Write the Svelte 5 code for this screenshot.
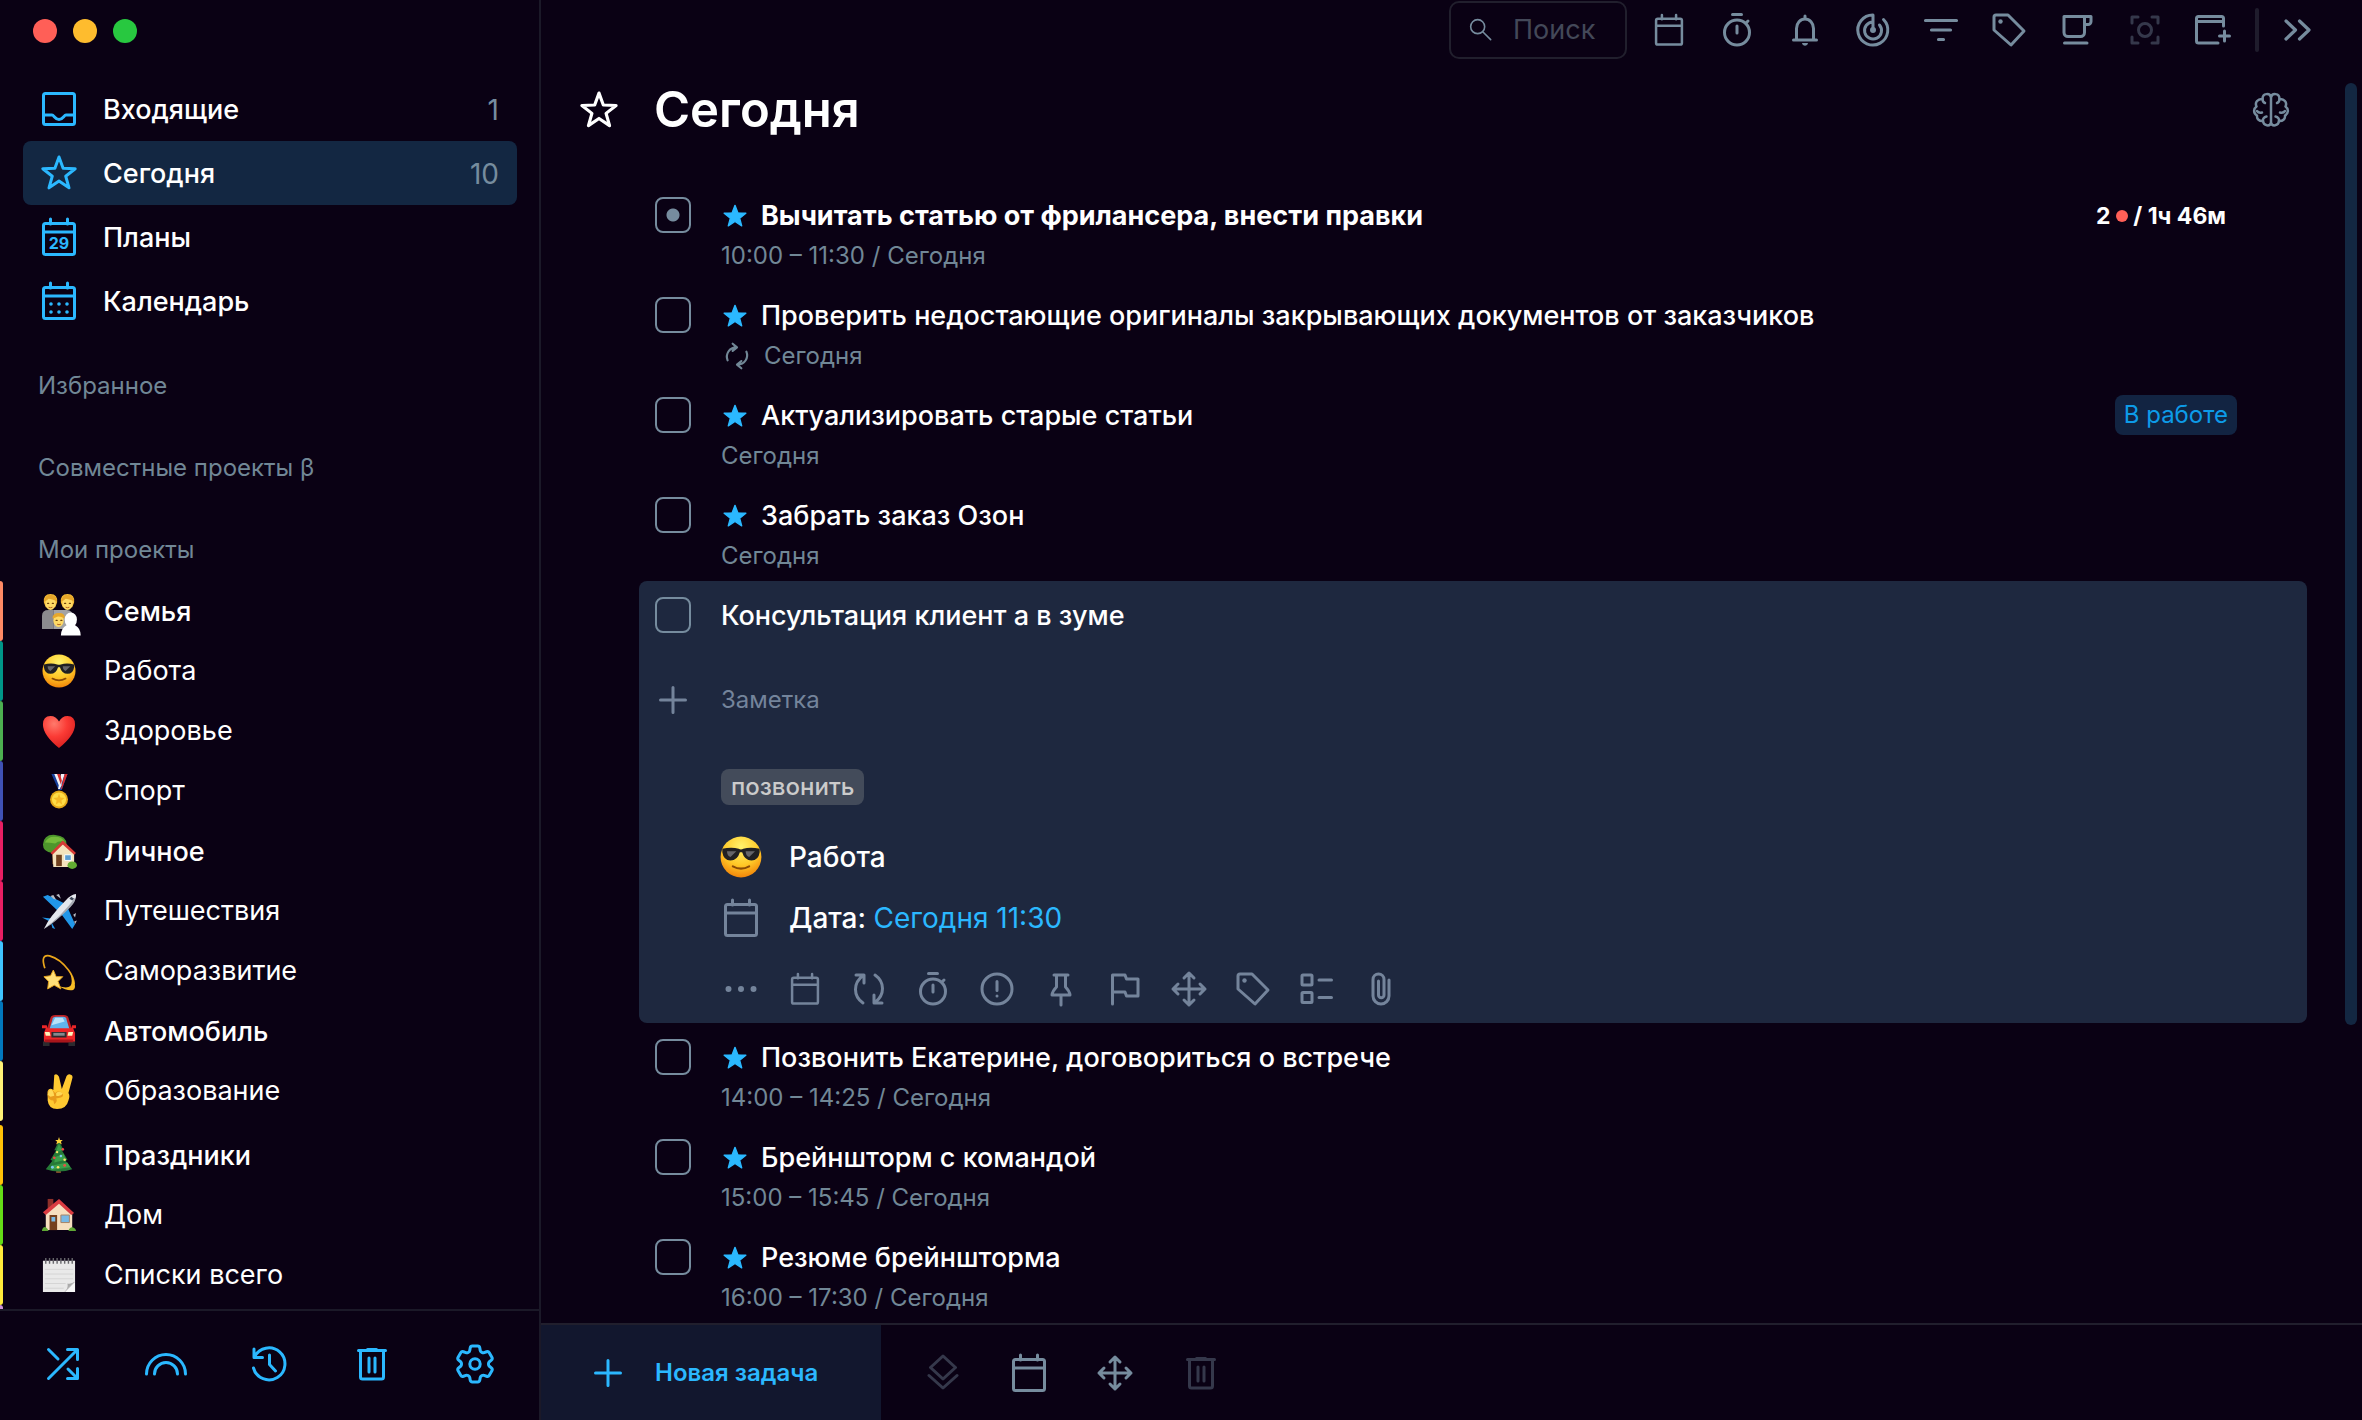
<!-- App.svelte -->
<script lang="ts">
  type Project = { name: string; emoji: string; color: string; strong?: boolean; spaced?: boolean };
  type Task = { title: string; meta: string; bold?: boolean; repeat?: boolean; timer?: boolean; status?: string };

  let search = $state('');
  let note = $state('');
  let openTitle = $state('Консультация клиент а в зуме');

  // Stroke icons, all on a 36x36 grid
  const calendar = '<rect x="2.5" y="4.5" width="31" height="31" rx="2"/><path d="M9.5 0v5M26.5 0v5M3 13h30"/>';
  const icons: Record<string, string> = {
    inbox: '<rect x="2.5" y="2.5" width="31" height="31" rx="2"/><path d="M3 24h8c2 0 3 4.5 7 4.5s5-4.5 7-4.5h8"/>',
    star: '<path d="M18 2l4.1 11.3 12.1.4-9.5 7.5L28 32.8 18 26 8 32.8l3.3-11.6-9.5-7.5 12.1-.4z"/>',
    starFill: '<path fill="currentColor" stroke-width="2" d="M18 2l4.300 11.200 12 .5-9.300 7.500 3.100 11.600L18 26.300 7.900 32.800 11 21.200l-9.300-7.500 12-.5z"/>',
    calendar,
    plans: calendar + '<text x="18" y="30" text-anchor="middle" font-size="16" font-weight="700" fill="currentColor" stroke="none">29</text>',
    month: calendar + '<path stroke-width="3.600" d="M10 21h0M18 21h0M26 21h0M10 29h0M18 29h0M26 29h0"/>',
    search: '<g stroke-width="2.400"><circle cx="13" cy="13" r="10.500"/><path d="M21 21L32.500 32.500"/></g>',
    timer: '<circle cx="18" cy="20.500" r="12.500"/><path d="M13.500 2.500h9M27 11l2-2M18 14v7"/>',
    bell: '<path d="M9.500 28V16.500a8.500 9.500 0 0 1 17 0V28M6.500 28h23M18 4v3"/><path fill="currentColor" stroke="none" d="M15 31h6c-.5 3.500-5.500 3.500-6 0z"/>',
    radar: '<path d="M18 16V3A15 15 0 1 0 28.500 7.500M18 10a8.500 8.500 0 1 0 6.500 3"/><circle cx="18" cy="18" r="1.500" fill="currentColor"/>',
    filter: '<path stroke-width="3.200" d="M2.500 8.500h31M8.500 18h19M15.500 27.500h5"/>',
    tag: '<path d="M5 3h12L33 19 20 33 3 18V5a2 2 0 0 1 2-2z"/><circle cx="9.500" cy="9.500" r="2.200" fill="currentColor" stroke="none"/>',
    cup: '<path d="M5 4.500h20.500v16a4 4 0 0 1-4 4H9a4 4 0 0 1-4-4zM25.500 4.500H32v5a3 3 0 0 1-3 3h-3.500M5.500 31h22.500"/>',
    focus: '<path d="M5 11V5h6M25 5h6v6M31 25v6h-6M11 31H5v-6"/><circle cx="18" cy="18" r="6.500"/>',
    windowPlus: '<path d="M28.500 14V6.500a2 2 0 0 0-2-2h-23a2 2 0 0 0-2 2v22.500a2 2 0 0 0 2 2H23M2 9.500h26M29.500 19v10M24.500 24h10"/>',
    chevrons: '<path stroke-width="3.200" d="M7 9l9.500 9L7 27M20.500 9l9.500 9-9.500 9"/>',
    brain: '<g stroke-width="2.500"><path d="M18 4v28M18 5.500C17 .5 9.500 1 9.500 7 5 6.500 1.500 10.500 3.500 14.500 0 17 .5 21.500 4 23.500c-.5 3.500 2.500 6 6 5.500 .5 5 7 6 8 1.500M18 5.500c1-5 8.500-4.500 8.500 1.500 4.500-.5 8 3.500 6 7.500 3.500 2.500 3 7-.5 9 .5 3.500-2.500 6-6 5.500-.5 5-7 6-8 1.500"/><path d="M9.500 7c0 2 1 3.500 2.500 4M26.500 7c0 2-1 3.500-2.500 4M4 19c1 1.500 3 2 5 1.500M32 19c-1 1.500-3 2-5 1.500M10 29c-.5-2 1-4 3.500-4.500M26 29c.5-2-1-4-3.500-4.500"/></g>',
    shuffle: '<path d="M3.500 32.500L32 4M22.500 3.500h10v10M3.500 3.500l9.500 9.500M23 23l9 9M22.500 32.500h10v-10"/>',
    rainbow: '<path d="M-1.500 28a19.500 19.500 0 0 1 39 0M6.500 28a11.500 11.500 0 0 1 23 0"/>',
    history: '<path d="M3 3v8.500h8.500M3.500 11A16 16 0 1 1 2.500 22M18.500 9v9.500l6 6.500"/>',
    trash: '<path d="M4.500 4.500h27M13.500 3.500h9M6.500 5v26a2 2 0 0 0 2 2h19a2 2 0 0 0 2-2V5M15 12v14M21 12v14"/>',
    gear: '<g transform="translate(-6 -6) scale(2)" stroke-width="1.500"><path d="M9.594 3.940c.09-.542.56-.94 1.110-.94h2.593c.55 0 1.020.398 1.110.94l.213 1.281c.063.374.313.686.645.87.074.04.147.083.22.127.325.196.72.257 1.075.124l1.217-.456a1.125 1.125 0 0 1 1.370.49l1.296 2.247a1.125 1.125 0 0 1-.26 1.431l-1.003.827c-.293.241-.438.613-.43.992a7.723 7.723 0 0 1 0 .255c-.008.378.137.75.43.991l1.004.827c.424.35.534.955.26 1.430l-1.298 2.247a1.125 1.125 0 0 1-1.369.491l-1.217-.456c-.355-.133-.75-.072-1.076.124a6.470 6.470 0 0 1-.22.128c-.331.183-.581.495-.644.869l-.213 1.281c-.09.543-.56.94-1.110.94h-2.594c-.55 0-1.019-.398-1.110-.94l-.213-1.281c-.062-.374-.312-.686-.644-.87a6.520 6.520 0 0 1-.22-.127c-.325-.196-.72-.257-1.076-.124l-1.217.456a1.125 1.125 0 0 1-1.369-.49l-1.297-2.247a1.125 1.125 0 0 1 .26-1.431l1.004-.827c.292-.24.437-.613.43-.991a6.932 6.932 0 0 1 0-.255c.007-.38-.138-.751-.43-.992l-1.004-.827a1.125 1.125 0 0 1-.26-1.430l1.297-2.247a1.125 1.125 0 0 1 1.370-.491l1.216.456c.356.133.751.072 1.076-.124.072-.044.146-.086.22-.128.332-.183.582-.495.644-.869z"/><circle cx="12" cy="12" r="2.600"/></g>',
    plus: '<path d="M18 5.500v25M5.500 18h25"/>',
    loop: '<path d="M5 24A13 13 0 0 1 17 6M12 1l6 5-6 5M31 12A13 13 0 0 1 19 30M24 35l-6-5 6-5"/>',
    dots: '<path stroke-width="6" d="M5.500 18h0M18 18h0M30.500 18h0"/>',
    repeat: '<path d="M12 32C2 25 2 12 12 4.500M5 4h8v8M24 4c10 7 10 20 0 27.500M31 32h-8v-8"/>',
    alert: '<circle cx="18" cy="18" r="15"/><path d="M18 10.500v9M18 25h0"/>',
    pin: '<path d="M11 4h14M13.500 4v12c-2 2-4 4-4.500 8h18c-.5-4-2.500-6-4.500-8V4M18 24v10"/>',
    flag: '<path d="M5.500 33V4h12.500l1.500 4H31v17H19.500L18 21H5.500"/>',
    move: '<path d="M18 2v32M2 18h32M13 7l5-5 5 5M13 29l5 5 5-5M7 13l-5 5 5 5M29 13l5 5-5 5"/>',
    checklist: '<rect x="3" y="4" width="10" height="10" rx="1"/><rect x="3" y="21.500" width="10" height="10" rx="1"/><path d="M20 9h12.500M20 26.500h12.500"/>',
    clip: '<path d="M26 9v16a8 8 0 0 1-16 0V8.500a5.500 5.500 0 0 1 11 0V24a2.500 2.500 0 0 1-5.500 0V10"/>',
    layers: '<path d="M18 1l12.500 11.500L18 24 5.500 12.500zM4 20.500L18 33l14-12.500"/>',
  };

  // Coloured project pictures, same grid
  const emojis: Record<string, string> = {
    family:
      '<path fill="#8b8b8e" d="M0 37V23q0-6 7-6h5v20z"/><path fill="#a3a3a5" d="M12 37V17h14q7 0 7 8v12z"/><g fill="#f3ba35"><path d="M2 9q-1-9 7-9t7 9l-2 5H4zM20 9q-1-9 7-9t7 9l-2 5H22z"/></g><g fill="#ffda65"><ellipse cx="9" cy="10" rx="5.500" ry="7"/><ellipse cx="27" cy="10" rx="5.500" ry="7"/><ellipse cx="17.500" cy="28" rx="5.500" ry="7"/></g><path fill="#e6a72b" d="M2 8q2-8 8-7t6 7q-6-3-9-3-2 2-5 3zM20 8q2-8 8-7t6 7q-6-3-9-3-2 2-5 3zM11 26q0-6 7-6t6 6q-5-3-8-2-2 1-5 2z"/><path stroke="#70440c" stroke-width="1.400" stroke-linecap="round" d="M6 10h1M11 10h1M24 10h1M29 10h1M15 28h1M20 28h1"/><path fill="none" stroke="#b35d1e" d="M7 14q2 1 4 0M25 14q2 1 4 0M16 32q2 1 4 0"/><path fill="#fff" d="M24 27a6.500 7.500 0 0 1 13 0q0 4-2 6 6 3 6 11H20q0-8 6-11-2-2-2-6z"/>',
    cool:
      '<defs><radialGradient id="cool" cy=".25" r=".8"><stop offset="0" stop-color="#fff36d"/><stop offset=".55" stop-color="#ffc928"/><stop offset="1" stop-color="#f07b05"/></radialGradient></defs><circle cx="18" cy="18" r="17.500" fill="url(#cool)"/><path fill="#202023" d="M2 11q8-2 14 0 2 1 4 0 6-2 14 0v3q-1 7-7 7-6 0-8-7h-2q-2 7-8 7-6 0-7-7z"/><path fill="#65656a" d="M6 13h8l-5 5q-3-1-3-5zM22 13h8l-5 5q-3-1-3-5z"/><path fill="none" stroke="#8a4b05" stroke-width="1.800" stroke-linecap="round" d="M11 26q7 4 14 0"/>',
    heart:
      '<defs><radialGradient id="heart" cx=".35" cy=".25" r=".8"><stop offset="0" stop-color="#ff7a6c"/><stop offset=".5" stop-color="#fb3b35"/><stop offset="1" stop-color="#d71e1e"/></radialGradient></defs><path fill="url(#heart)" d="M18 36Q1 22 1 11q0-9 8-9 6 0 9 6 3-6 9-6 8 0 8 9 0 11-17 25z"/>',
    medal:
      '<path fill="#173f9c" d="M10 0h5l6 16h-4zM23 0h4l-6 17h-4z"/><path fill="#f2f3f6" d="M13 0h4l4 12-2 3zM20 0h4l-5 16h-2z"/><path fill="#d92c2a" d="M16 0h3l2 7-1 4zM24 0h3l-6 16h-1z"/><circle cx="18" cy="27" r="9.500" fill="#e5a818"/><circle cx="18" cy="27" r="7.500" fill="#ffdc45"/><path fill="#f6b925" d="M18 21l1.500 4 4.500.5-3.500 2.500 1 4.500-3.500-2.500-3.500 2.500 1-4.500L12 25.500l4.500-.5z"/>',
    garden:
      '<path fill="#8a5a2b" d="M11 14h4v18h-4z"/><path fill="#4d962c" d="M1 11Q2 0 14 1t12 10q-2 5-8 5l-7 4Q1 19 1 11z"/><path fill="#74bb3b" d="M3 9q4-7 11-6 7 0 10 5-7-1-10 2-6-1-11-1z"/><path fill="#f4e3bd" d="M11 19l12-9 11 10v15H12z"/><path fill="#d63a35" d="M9 20L22 7l14 13-2 2-12-11-11 11z"/><path fill="#70401e" d="M15 22h6v12h-6z"/><path fill="#5c9ed2" stroke="#fff" d="M24 22h7v6h-7z"/><ellipse cx="32" cy="33" rx="5" ry="4" fill="#63ad32"/>',
    plane:
      '<path fill="#2196e8" d="M1 3l5-2 20 10-8 8zM26 12l9 20-3 5-14-19zM0 25l10 1 2 5zM9 28l5 9-3-1z"/><path fill="#b8bcc4" d="M9 2l3-1 3 5-3-1zM15 1l3-1 2 5zM33 22l3-2-1 5zM34 29l3-1-2 4z"/><path fill="#e4e7ed" d="M2 37Q8 24 25 7q6-7 11-7 1 6-6 13Q13 30 2 37z"/><path fill="#a6aab3" d="M2 37Q21 23 35 4q1 4-5 10Q13 31 2 37z"/><path fill="#3d4758" d="M31 3l3 2-2 2-3-2z"/>',
    dizzy:
      '<path fill="none" stroke="#e9a51b" stroke-width="1.800" d="M3 15Q-2 0 8 2q11 3 20 15 6 8 6 15"/><path fill="#f8bd25" d="M30 20q8 15 3 18-5 2-16-4 10 3 13 0 3-4 0-14z"/><path fill="#ffdf79" stroke="#e9a51b" d="M12 17l3 7 7 0-5 5 3 8-7-4-7 4 1-8-5-5 7-1z"/>',
    car:
      '<path fill="#bb2225" d="M9 4q1-3 5-3h9q4 0 5 3l4 13H5z"/><path fill="#60b4ed" d="M11 6q0-3 4-3h7q4 0 4 3l3 10H8z"/><path fill="#b9e3fa" d="M14 4h8l2 4-14 4z"/><path fill="#ec2527" d="M0 12h5l1 3h25l1-3h4v3h-3l2 5v10H2V20l2-5H0z"/><path fill="#2b2b2f" d="M1 29h7v5H1zM28 29h7v5h-7zM10 19h16v6H10z"/><path fill="#85888d" d="M12 20h12v3H12z"/><path fill="#fff4bb" d="M3 19h5l1 4H4zM28 19h5l-1 4h-5z"/><path fill="#a9151b" d="M3 27h30v3H3z"/>',
    victory:
      '<path fill="#ffc931" d="M13 1q3-2 5 2l3 13 5-14q2-3 5-1 2 1 1 4l-4 15q2 3 0 8-2 9-12 9-9 0-10-9V18q2-4 6-1z"/><path fill="#e89b1b" d="M6 19q2-4 6-1l2 2q3-3 7 0 3 3-1 5l-5 1q2 3-2 6l-1-4q-5 0-6-5z"/><path fill="#ffd956" d="M7 18q3-3 5 1l1 4-4 1-3-2zM15 20q4-3 7 1-2 3-7 2z"/>',
    tree:
      '<path fill="#87512b" d="M15 31h5v6h-5z"/><path fill="#267a37" d="M18 3l5 10-2 0 6 10-2 1 7 9q-14 5-28 0l7-9-2-1 6-10-2 0z"/><path fill="#3ba04a" d="M18 6l3 7-7 3zM14 20l9-3 2 6-12 3zM11 29l16-3 3 5-21 3z"/><path fill="#ffd53b" d="M18-1l1 3 3 0-2 2 1 3-3-2-3 2 1-3-2-2 3 0z"/><g fill="#ef4a47"><circle cx="22" cy="12" r="1.400"/><circle cx="13" cy="21" r="1.400"/><circle cx="24" cy="29" r="1.500"/></g><g fill="#7ec7f3"><circle cx="20" cy="19" r="1.300"/><circle cx="11" cy="31" r="1.500"/></g><g fill="#ffe36b"><circle cx="16" cy="15" r="1.200"/><circle cx="24" cy="23" r="1.400"/><circle cx="17" cy="31" r="1.400"/></g>',
    house:
      '<path fill="#8d2f29" d="M6 1h6v10H6z"/><path fill="#f6dfc0" d="M4 15L18 3l14 12v19H4z"/><path fill="#d93b41" d="M1 15L18 1l16 15-3 2L18 6 4 18z"/><path fill="#74401e" d="M8 18h8v16H8z"/><path fill="#78b9e6" d="M10 20h4v5h-4zM20 18h9v8h-9z"/><path fill="none" stroke="#a67f62" d="M20 18h9v8h-9z"/><path fill="#5fa735" d="M0 34q1-4 4-3 2 1 3 4H0zM28 35q1-4 4-4 4 1 4 4z"/>',
    notepad:
      '<path fill="#e9e9e9" d="M1 3h34v22L24 36H1z"/><path fill="#aaa" d="M35 25L24 36q4-4 3-9 4 1 8-2z"/><path fill="#f7f7f7" d="M35 25v11H24z"/><path stroke="#c7c7c7" stroke-width=".6" d="M3 12h30M3 17h30M3 22h30M3 27h22M3 32h20"/><path stroke="#67676b" stroke-width="1.500" d="M4 0v6M8 0v6M12 0v6M16 0v6M20 0v6M24 0v6M28 0v6M32 0v6"/>',
  };

  const nav = [
    { icon: 'inbox', label: 'Входящие', count: 1 },
    { icon: 'star', label: 'Сегодня', count: 10, active: true },
    { icon: 'plans', label: 'Планы' },
    { icon: 'month', label: 'Календарь' },
  ];

  const projects: Project[] = [
    { name: 'Семья', emoji: 'family', color: '#ff8a65', strong: true },
    { name: 'Работа', emoji: 'cool', color: '#009688' },
    { name: 'Здоровье', emoji: 'heart', color: '#4caf50' },
    { name: 'Спорт', emoji: 'medal', color: '#3f51b5' },
    { name: 'Личное', emoji: 'garden', color: '#e91e63', strong: true },
    { name: 'Путешествия', emoji: 'plane', color: '#e91e63' },
    { name: 'Саморазвитие', emoji: 'dizzy', color: '#40c4ff' },
    { name: 'Автомобиль', emoji: 'car', color: '#0277bd', strong: true },
    { name: 'Образование', emoji: 'victory', color: '#fff176' },
    { name: 'Праздники', emoji: 'tree', color: '#ffc107', strong: true, spaced: true },
    { name: 'Дом', emoji: 'house', color: '#64dd17' },
    { name: 'Списки всего', emoji: 'notepad', color: '#ffeb3b' },
  ];

  const before: Task[] = [
    { title: 'Вычитать статью от фрилансера, внести правки', meta: '10:00 – 11:30 / Сегодня', bold: true, timer: true },
    { title: 'Проверить недостающие оригиналы закрывающих документов от заказчиков', meta: 'Сегодня', repeat: true },
    { title: 'Актуализировать старые статьи', meta: 'Сегодня', status: 'В работе' },
    { title: 'Забрать заказ Озон', meta: 'Сегодня' },
  ];

  const after: Task[] = [
    { title: 'Позвонить Екатерине, договориться о встрече', meta: '14:00 – 14:25 / Сегодня' },
    { title: 'Брейншторм с командой', meta: '15:00 – 15:45 / Сегодня' },
    { title: 'Резюме брейншторма', meta: '16:00 – 17:30 / Сегодня' },
  ];

  const tools = [
    { icon: 'calendar', label: 'Календарь', small: true },
    { icon: 'timer', label: 'Таймер' },
    { icon: 'bell', label: 'Уведомления' },
    { icon: 'radar', label: 'Привычки' },
    { icon: 'filter', label: 'Фильтр' },
    { icon: 'tag', label: 'Метки' },
    { icon: 'cup', label: 'Перерыв' },
    { icon: 'focus', label: 'Фокус', dim: true },
    { icon: 'windowPlus', label: 'Новое окно' },
  ];

  const actions = [
    { icon: 'dots', label: 'Ещё' },
    { icon: 'calendar', label: 'Дата', small: true },
    { icon: 'repeat', label: 'Повтор' },
    { icon: 'timer', label: 'Таймер' },
    { icon: 'alert', label: 'Приоритет' },
    { icon: 'pin', label: 'Закрепить' },
    { icon: 'flag', label: 'Дедлайн' },
    { icon: 'move', label: 'Переместить' },
    { icon: 'tag', label: 'Метка' },
    { icon: 'checklist', label: 'Чек-лист' },
    { icon: 'clip', label: 'Вложение' },
  ];

  const sideActions = [
    { icon: 'shuffle', label: 'Перемешать' },
    { icon: 'rainbow', label: 'Обзор' },
    { icon: 'history', label: 'История' },
    { icon: 'trash', label: 'Корзина' },
    { icon: 'gear', label: 'Настройки' },
  ];
</script>

{#snippet icon(name: string, size = 36)}
  <svg class="icon" width={size} height={size} viewBox="0 0 36 36" aria-hidden="true">{@html icons[name]}</svg>
{/snippet}

{#snippet emoji(name: string, size = 34)}
  <svg class="emoji" width={size} height={size} viewBox="0 0 36 36" aria-hidden="true">{@html emojis[name]}</svg>
{/snippet}

{#snippet taskRow(task: Task)}
  <li class="task">
    <input type="checkbox" class="check" class:running={task.timer} aria-label={task.title} />
    <div class="task-body">
      <div class="task-title" class:bold={task.bold}>
        <span class="today">{@render icon('starFill', 24)}</span>
        <span>{task.title}</span>
      </div>
      <div class="task-meta">
        {#if task.repeat}<span class="loop">{@render icon('loop', 26)}</span>{/if}
        <span>{task.meta}</span>
      </div>
    </div>
    {#if task.timer}
      <div class="spent">2 <i></i> / 1ч 46м</div>
    {/if}
    {#if task.status}
      <div class="status">{task.status}</div>
    {/if}
  </li>
{/snippet}

<div class="app">
  <aside class="sidebar">
    <div class="lights">
      <button class="close" aria-label="Закрыть"></button>
      <button class="minimize" aria-label="Свернуть"></button>
      <button class="zoom" aria-label="Развернуть"></button>
    </div>

    <nav class="nav">
      {#each nav as item}
        <a href="#{item.icon}" class:active={item.active}>
          {@render icon(item.icon)}
          <span class="label">{item.label}</span>
          {#if item.count}<span class="count">{item.count}</span>{/if}
        </a>
      {/each}
    </nav>

    <div class="sections">
      <h2>Избранное</h2>
      <h2>Совместные проекты β</h2>
      <h2>Мои проекты</h2>
    </div>

    <div class="projects">
      {#each projects as project}
        <a href="#{project.emoji}" class:strong={project.strong} class:spaced={project.spaced}>
          <span class="bar" style="background: {project.color}"></span>
          {@render emoji(project.emoji)}
          <span class="name">{project.name}</span>
        </a>
      {/each}
      <span class="bar next"></span>
    </div>

    <div class="side-actions">
      {#each sideActions as item}
        <button aria-label={item.label}>{@render icon(item.icon)}</button>
      {/each}
    </div>
  </aside>

  <main class="main">
    <header class="toolbar">
      <label class="search">
        {@render icon('search', 24)}
        <input type="text" placeholder="Поиск" aria-label="Поиск" bind:value={search} />
      </label>
      <div class="tools">
        {#each tools as tool}
          <button class:dim={tool.dim} aria-label={tool.label}>{@render icon(tool.icon, tool.small ? 30 : 36)}</button>
        {/each}
      </div>
      <span class="divider"></span>
      <button aria-label="Свернуть панель">{@render icon('chevrons')}</button>
    </header>

    <div class="content">
      <div class="page">
        <div class="heading">
          {@render icon('star', 38)}
          <h1>Сегодня</h1>
          <button aria-label="Обзор дня">{@render icon('brain')}</button>
        </div>

        <ul class="tasks">
          {#each before as task}
            {@render taskRow(task)}
          {/each}

          <li class="card">
            <div class="line">
              <input type="checkbox" class="check" aria-label={openTitle} />
              <input class="title-input" type="text" aria-label="Название задачи" bind:value={openTitle} />
            </div>
            <div class="line note">
              <button aria-label="Добавить">{@render icon('plus')}</button>
              <textarea rows="1" placeholder="Заметка" aria-label="Заметка" bind:value={note}></textarea>
            </div>
            <div class="details">
              <span class="tag">позвонить</span>
              <div class="detail project">{@render emoji('cool', 42)}<span>Работа</span></div>
              <div class="detail date">
                {@render icon('calendar')}
                <span>Дата: <a href="#date">Сегодня 11:30</a></span>
              </div>
              <div class="actions">
                {#each actions as action}
                  <button aria-label={action.label}>{@render icon(action.icon, action.small ? 30 : 36)}</button>
                {/each}
              </div>
            </div>
          </li>

          {#each after as task}
            {@render taskRow(task)}
          {/each}
        </ul>
      </div>
      <div class="scroll-thumb"></div>
    </div>

    <footer class="bottom">
      <button class="new-task">{@render icon('plus')}<span>Новая задача</span></button>
      <div class="bottom-tools">
        <button class="dim" aria-label="Слои">{@render icon('layers')}</button>
        <button aria-label="Дата">{@render icon('calendar')}</button>
        <button aria-label="Переместить">{@render icon('move')}</button>
        <button class="dim" aria-label="Удалить">{@render icon('trash')}</button>
      </div>
    </footer>
  </main>
</div>

<style>
  :global(body) {
    margin: 0;
    background: #0a0114;
  }

  .app {
    --accent: #2bb8ff;
    --muted: #768c9e;
    --line: #1b1928;
    display: flex;
    height: 100vh;
    overflow: hidden;
    color: #fff;
    font-family: Inter, "Noto Sans", sans-serif;
    font-size: 27px;
    font-weight: 500;
    line-height: 36px;
  }

  .app * {
    box-sizing: border-box;
  }

  a {
    color: inherit;
    text-decoration: none;
  }

  h1,
  h2,
  ul {
    margin: 0;
    padding: 0;
    list-style: none;
  }

  button,
  input,
  textarea {
    margin: 0;
    padding: 0;
    border: none;
    outline: none;
    background: none;
    color: inherit;
    font: inherit;
  }

  button {
    display: flex;
    align-items: center;
    justify-content: center;
    width: 36px;
    height: 36px;
    flex-shrink: 0;
    cursor: pointer;
  }

  .icon {
    flex-shrink: 0;
    overflow: visible;
    fill: none;
    stroke: currentColor;
    stroke-width: 3;
    stroke-linecap: round;
    stroke-linejoin: round;
  }

  .emoji {
    flex-shrink: 0;
    overflow: visible;
  }

  .dim {
    opacity: 0.4;
  }

  /* Sidebar */
  .sidebar {
    display: flex;
    flex-direction: column;
    width: 541px;
    flex-shrink: 0;
    border-right: 2px solid var(--line);
  }

  .lights {
    display: flex;
    gap: 16px;
    padding: 19px 33px 34px;
  }

  .lights button {
    width: 24px;
    height: 24px;
    border-radius: 50%;
  }

  .close {
    background: #ff5f57;
  }

  .minimize {
    background: #febc2e;
  }

  .zoom {
    background: #28c840;
  }

  .nav {
    padding: 0 22px 0 23px;
  }

  .nav a {
    display: flex;
    align-items: center;
    gap: 26px;
    height: 64px;
    padding: 0 18px;
    border-radius: 8px;
  }

  .nav a.active {
    background: #132742;
  }

  .nav .icon {
    color: var(--accent);
  }

  .label {
    flex: 1;
  }

  .label,
  .count {
    padding-top: 2px;
  }

  .count {
    color: var(--muted);
    font-size: 28px;
    font-weight: 400;
  }

  .sections {
    display: flex;
    flex-direction: column;
    gap: 46px;
    padding: 35px 38px 13px;
  }

  h2 {
    color: #718796;
    font-size: 24px;
    font-weight: 400;
  }

  .projects {
    flex: 1;
    min-height: 0;
    overflow: hidden;
  }

  .projects a {
    display: flex;
    align-items: center;
    height: 60px;
    font-weight: 400;
  }

  .projects a.strong {
    font-weight: 500;
  }

  .strong .name {
    padding-top: 2px;
  }

  .projects a.spaced {
    margin-top: 4px;
  }

  .projects .emoji {
    margin: 0 28px 0 39px;
  }

  .bar {
    width: 3px;
    height: 60px;
    border-radius: 0 3px 3px 0;
  }

  .bar.next {
    display: block;
    background: #ce93d8;
  }

  .side-actions {
    display: flex;
    align-items: center;
    justify-content: space-between;
    height: 111px;
    padding: 0 46px 4px 45px;
    border-top: 2px solid var(--line);
    color: var(--accent);
  }

  /* Main column */
  .main {
    display: flex;
    flex: 1;
    flex-direction: column;
    min-width: 0;
  }

  .toolbar {
    display: flex;
    align-items: center;
    justify-content: flex-end;
    height: 60px;
    padding-right: 47px;
    color: var(--muted);
  }

  .search {
    display: flex;
    align-items: center;
    gap: 20px;
    width: 178px;
    height: 58px;
    padding: 0 18px;
    border: 2px solid #211f2d;
    border-radius: 10px;
  }

  .search input {
    width: 100px;
    min-width: 0;
    font-weight: 400;
  }

  .search input::placeholder {
    color: #434858;
    opacity: 1;
  }

  .tools {
    display: flex;
    gap: 32px;
    padding: 0 24px;
  }

  .divider {
    width: 4px;
    height: 44px;
    margin-right: 20px;
    border-radius: 2px;
    background: #1f1c2c;
  }

  .content {
    display: flex;
    flex: 1;
    min-height: 0;
    overflow: hidden;
  }

  .page {
    flex: 1;
    min-width: 0;
    padding-right: 38px;
  }

  .scroll-thumb {
    width: 12px;
    height: calc(75% - 5px);
    margin: 23px 5px 0 0;
    border-radius: 6px;
    background: #132742;
  }

  .heading {
    display: flex;
    align-items: center;
    height: 100px;
    margin-bottom: 21px;
    padding: 0 18px 0 39px;
  }

  h1 {
    flex: 1;
    margin-left: 36px;
    font-size: 49px;
    font-weight: 600;
    line-height: 60px;
  }

  .heading button {
    color: var(--muted);
  }

  .tasks {
    margin-left: 98px;
  }

  .task {
    display: flex;
    gap: 30px;
    height: 100px;
    padding: 16px;
  }

  .check {
    width: 36px;
    height: 36px;
    flex-shrink: 0;
    appearance: none;
    border: 2px solid var(--muted);
    border-radius: 8px;
  }

  .check.running {
    background: radial-gradient(circle, var(--muted) 6px, transparent 7px);
  }

  .task-body {
    flex: 1;
    min-width: 0;
  }

  .task-title,
  .task-meta {
    display: flex;
    align-items: center;
    white-space: nowrap;
  }

  .task-title {
    gap: 13px;
    line-height: 38px;
  }

  .task-title.bold {
    font-weight: 700;
  }

  .today,
  .loop {
    display: flex;
  }

  .today {
    padding: 0 1px 0 2px;
    color: var(--accent);
  }

  .task-meta {
    gap: 14px;
    margin-top: 3px;
    color: #718796;
    font-size: 24px;
    font-weight: 400;
  }

  .loop {
    margin-left: 3px;
  }

  .spent {
    padding-right: 65px;
    font-size: 23px;
    font-weight: 700;
    line-height: 38px;
  }

  .spent i {
    display: inline-block;
    width: 12px;
    height: 12px;
    margin-bottom: 2px;
    border-radius: 50%;
    background: #ff5f57;
  }

  .status {
    height: 40px;
    margin: -2px 54px 0 0;
    padding: 0 9px;
    border-radius: 8px;
    background: #122442;
    color: #0d9be8;
    font-size: 24px;
    font-weight: 400;
    line-height: 40px;
  }

  .card {
    padding: 16px;
    border-radius: 8px;
    background: #1e283f;
  }

  .line {
    display: flex;
    gap: 30px;
  }

  .title-input,
  .note textarea {
    flex: 1;
    height: 36px;
    resize: none;
    overflow: hidden;
  }

  .title-input {
    padding-top: 2px;
  }

  .note {
    margin: 49px 0 51px;
    color: #74849b;
    font-size: 24px;
    font-weight: 400;
  }

  .note textarea::placeholder {
    color: #74849b;
    opacity: 1;
  }

  .details {
    padding-left: 66px;
  }

  .tag {
    display: block;
    width: fit-content;
    padding: 0 10px;
    border-radius: 8px;
    background: #434b5a;
    color: #cbcbcb;
    font-size: 24px;
  }

  .detail {
    display: flex;
    align-items: center;
    font-size: 28px;
  }

  .project {
    gap: 27px;
    height: 42px;
    margin: 31px 0 22px -1px;
  }

  .date {
    gap: 30px;
    padding-left: 2px;
  }

  .date .icon,
  .actions {
    color: #74849b;
  }

  .date a {
    color: var(--accent);
    font-weight: 400;
  }

  .actions {
    display: flex;
    gap: 28px;
    margin-top: 35px;
    padding-left: 2px;
  }

  /* Bottom bar */
  .bottom {
    display: flex;
    height: 97px;
    flex-shrink: 0;
    border-top: 2px solid #211f2d;
    color: var(--muted);
  }

  .new-task {
    justify-content: flex-start;
    gap: 29px;
    width: 340px;
    height: 100%;
    padding-left: 49px;
    background: #12172e;
    color: var(--accent);
    font-size: 24px;
    font-weight: 600;
  }

  .bottom-tools {
    display: flex;
    align-items: center;
    gap: 50px;
    padding-left: 44px;
  }
</style>
